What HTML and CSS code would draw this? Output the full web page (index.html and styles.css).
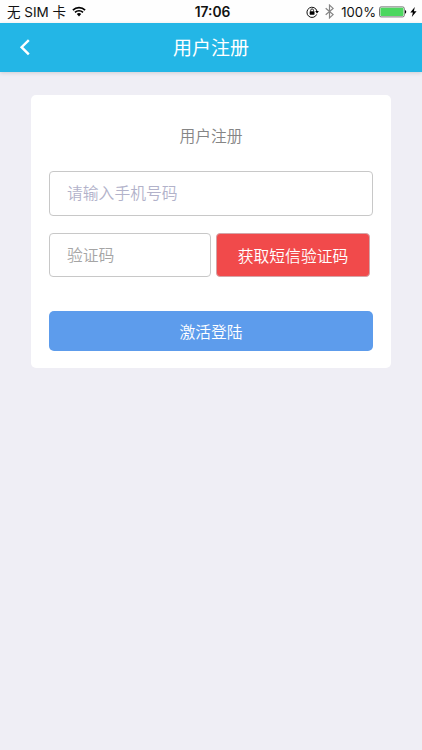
FILE: index.html
```
<!DOCTYPE html>
<html lang="zh-CN">
	<head>
		<meta charset="utf-8" />
		<meta name="viewport" content="width=device-width, initial-scale=1" />
		<title>用户注册</title>
		<link rel="stylesheet" href="styles.css">
	</head>
	<body>
		<!--状态栏-->
		<div class="status">
			<div class="status-left">
				<span>无 SIM 卡</span>
				<svg class="wifi" width="14" height="11" viewBox="0 0 14 11">
					<path d="M.9 4.1a8.8 8.8 0 0 1 12.2 0M3 6.4a5.7 5.7 0 0 1 8 0" fill="none" stroke="#000" stroke-width="1.7"/>
					<path d="M7 10.4L4.8 8.1a3.2 3.2 0 0 1 4.4 0z"/>
				</svg>
			</div>
			<div class="status-time">17:06</div>
			<div class="status-right">
				<svg class="lock" width="13" height="12" viewBox="0 0 13 12">
					<path d="M10.7 8.4A5.1 5.1 0 1 1 11 5.2" fill="none" stroke="#111" stroke-width="1"/>
					<path d="M9.2 5h3.7L11 7.6z"/>
					<rect x="3.7" y="5.3" width="4.8" height="3.4" rx=".4"/>
					<path d="M4.7 5.5V4.3a1.4 1.4 0 0 1 2.8 0v1.2" fill="none" stroke="#111" stroke-width=".9"/>
				</svg>
				<svg class="bluetooth" width="9" height="15" viewBox="0 0 9 15">
					<path d="M.7 4.2l7.4 6.4-3.6 3.3V1.1l3.6 3.3L.7 10.8" fill="none" stroke="#858585" stroke-width="1.2"/>
				</svg>
				<span class="percent">100%</span>
				<svg class="battery" width="28" height="12" viewBox="0 0 28 12">
					<rect x=".5" y=".9" width="24.8" height="10" rx="1.6" fill="#fff" stroke="#555" stroke-width=".8"/>
					<rect x="1.4" y="1.8" width="23" height="8.2" rx=".8" fill="#4cd75f"/>
					<path d="M26 4.1c1.7.5 1.7 3.2 0 3.7z"/>
				</svg>
				<svg class="bolt" width="7" height="10" viewBox="0 0 7 10">
					<path d="M4.8 0L.3 5.6h2.6L1.8 10l4.8-5.8H3.9z"/>
				</svg>
			</div>
		</div>

		<!--导航栏-->
		<div class="header">
			<a class="back">
				<svg width="12" height="18" viewBox="0 0 12 18">
					<path d="M9.8 1.2L2.6 8.2l7.2 7.2" fill="none" stroke="#fff" stroke-width="2.4"/>
				</svg>
			</a>
			<h1>用户注册</h1>
		</div>

		<!--注册表单-->
		<form class="card">
			<h2>用户注册</h2>
			<input class="field phone" type="tel" placeholder="请输入手机号码">
			<div class="code-row">
				<input class="field code" type="text" placeholder="验证码">
				<button class="send" type="button">获取短信验证码</button>
			</div>
			<button class="submit" type="button">激活登陆</button>
		</form>
	</body>
</html>
```

FILE: styles.css
```
*{
	margin: 0;
	padding: 0;
	box-sizing: border-box;
}
body{
	background-color: #efeef5;
	font-family: "Liberation Sans", "Noto Sans CJK SC", sans-serif;
	font-size: 15.8px;
	font-weight: 350;
}
svg{
	display: block;
	flex: none;
}
input,
button{
	font-family: inherit;
	font-size: inherit;
	font-weight: inherit;
}

/*状态栏*/
.status{
	display: grid;
	grid-template-columns: 1fr auto 1fr;
	align-items: center;
	height: 23px;
	padding: 0 5px 0 7px;
	background-color: #fefefe;
	color: #111;
	font-family: Inter, "Noto Sans CJK SC", sans-serif;
	font-size: 13.5px;
	font-weight: 400;
	line-height: 22px;
	white-space: nowrap;
}
.status-left,
.status-right{
	display: flex;
	align-items: center;
}
.status-right{
	justify-content: flex-end;
}
.status-time{
	padding-left: 1px;
	font-weight: 600;
	font-size: 13.8px;
}
.wifi{
	margin-left: 6px;
}
.bluetooth{
	margin: 0 7px 0 6px;
}
.percent{
	font-size: 13.1px;
}
.battery{
	margin-left: 3px;
}
.bolt{
	margin-left: 3px;
}

/*导航栏*/
.header{
	display: grid;
	grid-template-columns: 60px 1fr 60px;
	align-items: center;
	height: 49px;
	background-color: #23b6e6;
	box-shadow: 0 1px 4px rgba(0, 0, 0, .14);
	color: #fff;
}
.back{
	padding-left: 19px;
}
.header h1{
	height: 49px;
	font-size: 19px;
	font-weight: 400;
	line-height: 51px;
	text-align: center;
}

/*表单*/
.card{
	width: 360px;
	height: 273px;
	margin: 23px auto 0 31px;
	padding: 30px 18px 0;
	border-radius: 5px;
	background-color: #fff;
}
.card h2{
	height: 46px;
	color: #858585;
	font-size: 15.8px;
	font-weight: inherit;
	line-height: 24px;
	text-align: center;
}
.field{
	display: block;
	width: 100%;
	height: 45px;
	padding: 0 17px;
	border: 1px solid #c8c8c8;
	border-radius: 4px;
	background-color: #fff;
}
.field::placeholder{
	color: #a5a5a5;
}
.phone::placeholder{
	color: #b2b2ca;
}
.code-row{
	display: flex;
	margin-top: 17px;
}
.code{
	width: 162px;
	height: 44px;
	padding-top: 2px;
}
.send{
	width: 154px;
	height: 44px;
	margin-left: 5px;
	border: 1px solid #d3a5a8;
	border-radius: 4px;
	background-color: #f14a4b;
	color: #fff;
}
.submit{
	display: block;
	width: 100%;
	height: 40px;
	margin-top: 34px;
	border: none;
	border-radius: 5px;
	background-color: #5d9cec;
	color: #fff;
}
```
